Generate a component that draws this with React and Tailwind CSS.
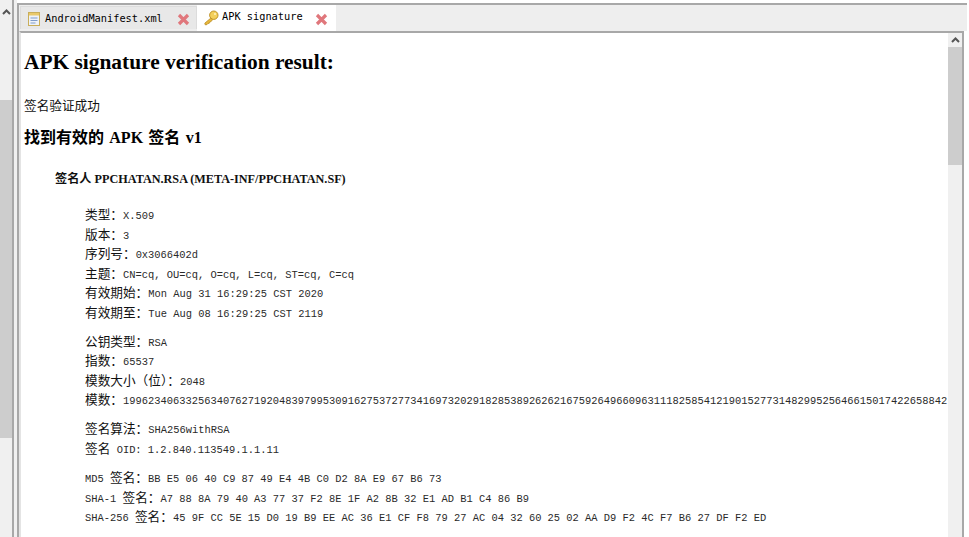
import React from 'react';

const serif = '[font-family:"Liberation_Serif","Noto_Sans_CJK_SC",serif]';

const ChevronUp = () => (
  <svg width="9" height="6" viewBox="0 0 9 6" fill="none" stroke="#555" strokeWidth="2">
    <path d="M1 5l3.5-3.5L8 5" />
  </svg>
);

const CloseX = () => (
  <svg width="13" height="13" viewBox="0 0 13 13" fill="none" stroke="#e0777c" strokeWidth="3.2" className="shrink-0 mt-[2px]">
    <path d="M2 2l9 9M11 2l-9 9" />
  </svg>
);

const FileIcon = () => (
  <svg width="12" height="14" viewBox="0 0 12 14" className="shrink-0 mt-[1px]">
    <rect x="0.5" y="0.5" width="11" height="13" fill="#eef2f8" stroke="#c9ae5a" />
    <rect x="1" y="1" width="10" height="2.5" fill="#e9c96a" />
    <path d="M2.5 6h7M2.5 8.5h7M2.5 11h5" stroke="#7f9ccb" strokeWidth="1" />
  </svg>
);

const KeyIcon = () => (
  <svg width="16" height="16" viewBox="0 0 16 16" className="shrink-0">
    <path d="M8.5 7.5L1.8 13.2l.4 1.6 1.8-.2 1-1.2 1.2-.1.3-1.3 1.3-.2 2-2.4" fill="#e8b83c" stroke="#b98a1e" strokeWidth="0.8" />
    <circle cx="10.8" cy="5.2" r="4.2" fill="#f3cf5b" stroke="#b98a1e" strokeWidth="0.9" />
    <circle cx="12" cy="4" r="1" fill="#fff3c2" />
  </svg>
);

const mono = "font-['Liberation_Mono',monospace] text-[10.42px] text-[#2a2a2a]";

// 键值行：中文标签 + 等宽值
const Row = ({ label, value }) => (
  <div className="h-[19.6px] leading-[19.6px] whitespace-nowrap">
    {label}
    <span className={mono}>{value}</span>
  </div>
);

const groups = [
  {
    gap: 'mb-[9px]',
    rows: [
      ['类型：', 'X.509'],
      ['版本：', '3'],
      ['序列号：', '0x3066402d'],
      ['主题：', 'CN=cq, OU=cq, O=cq, L=cq, ST=cq, C=cq'],
      ['有效期始：', 'Mon Aug 31 16:29:25 CST 2020'],
      ['有效期至：', 'Tue Aug 08 16:29:25 CST 2119'],
    ],
  },
  {
    gap: 'mb-[9px]',
    rows: [
      ['公钥类型：', 'RSA'],
      ['指数：', '65537'],
      ['模数大小（位）：', '2048'],
      ['模数：', '199623406332563407627192048397995309162753727734169732029182853892626216759264966096311182585412190152773148299525646615017422658842'],
    ],
  },
  {
    gap: 'mb-[10px]',
    rows: [
      ['签名算法：', 'SHA256withRSA'],
      ['签名\u00a0\u00a0', 'OID: 1.2.840.113549.1.1.11'],
    ],
  },
];

const hashes = [
  ['MD5', 'BB E5 06 40 C9 87 49 E4 4B C0 D2 8A E9 67 B6 73'],
  ['SHA-1', 'A7 88 8A 79 40 A3 77 37 F2 8E 1F A2 8B 32 E1 AD B1 C4 86 B9'],
  ['SHA-256', '45 9F CC 5E 15 D0 19 B9 EE AC 36 E1 CF F8 79 27 AC 04 32 60 25 02 AA D9 F2 4C F7 B6 27 DF F2 ED'],
];

export default function App() {
  return (
    <div className={`w-[969px] h-[537px] flex overflow-hidden bg-white ${serif}`}>
      {/* 左侧滚动条 */}
      <div className="w-[14px] shrink-0 flex flex-col bg-[#f0f0f0] border-r-2 border-[#a8a8a8]">
        <div className="h-[20px] pt-[9px] pl-[1px] flex items-start justify-center">
          <ChevronUp />
        </div>
        <div className="mt-[80px] h-[338px] bg-[#cdcdcd]" />
      </div>

      <div className="w-[3px] shrink-0 bg-[#f0f0f0]" />

      <div className="w-[950px] shrink-0 mt-[3px] flex flex-col border-t-2 border-l-2 border-[#a8a8a8]">
        {/* 标签栏 */}
        <div className="h-[26px] shrink-0 flex items-end bg-[#eeeeee] pl-[1px]">
          <div className="w-[177px] h-[23px] mb-[2px] flex items-center pl-[7px] bg-[#e8e8e8] border border-b-0 border-[#dcdcdc] font-['DejaVu_Sans_Mono',monospace] text-[10.3px] text-black">
            <FileIcon />
            <span className="ml-[5px] w-[132px] mt-[1px]">AndroidManifest.xml</span>
            <CloseX />
          </div>
          <div className="w-[139px] h-[26px] flex items-center pl-[6px] bg-white font-['DejaVu_Sans_Mono',monospace] text-[10.3px] text-black">
            <KeyIcon />
            <span className="ml-[3px] w-[93px] -mt-[3px]">APK signature</span>
            <CloseX />
          </div>
        </div>

        {/* 内容区 */}
        <div className="relative flex-1 min-h-0 mr-[3px] border-t-2 border-r-2 border-[#a8a8a8] border-l-2 border-l-[#e4e4e4] overflow-hidden">
          <div className="pl-[3px] pt-[15px] text-[12.67px] text-[#111]">
            <h1 className="text-[21.4px] leading-[28px] font-bold text-black whitespace-nowrap">
              APK signature verification result:
            </h1>
            <p className="mt-[21px] text-[12.67px] leading-[18px]">签名验证成功</p>
            <h2 className="mt-[11px] text-[16px] leading-[24px] font-bold text-black whitespace-nowrap [word-spacing:1.3px]">
              找到有效的 APK 签名 v1
            </h2>
            <h3 className="mt-[20px] ml-[31px] text-[12.2px] leading-[18px] font-bold whitespace-nowrap">
              签名人 PPCHATAN.RSA (META-INF/PPCHATAN.SF)
            </h3>

            <div className="ml-[61px] mt-[18px]">
              {groups.map((g) => (
                <div key={g.rows[0][0]} className={g.gap}>
                  {g.rows.map(([label, value]) => (
                    <Row key={label} label={label} value={value} />
                  ))}
                </div>
              ))}
              <div>
                {hashes.map(([name, value]) => (
                  <div key={name} className="h-[19.6px] leading-[19.6px] whitespace-nowrap">
                    <span className={mono}>{name} </span>
                    签名：
                    <span className={mono}>{value}</span>
                  </div>
                ))}
              </div>
            </div>
          </div>

          {/* 右侧滚动条 */}
          <div className="absolute top-0 right-0 bottom-0 w-[14px] bg-[#f0f0f0] flex flex-col">
            <div className="h-[14px] flex items-center justify-center">
              <ChevronUp />
            </div>
            <div className="h-[118px] bg-[#cdcdcd]" />
          </div>
        </div>
      </div>
    </div>
  );
}
